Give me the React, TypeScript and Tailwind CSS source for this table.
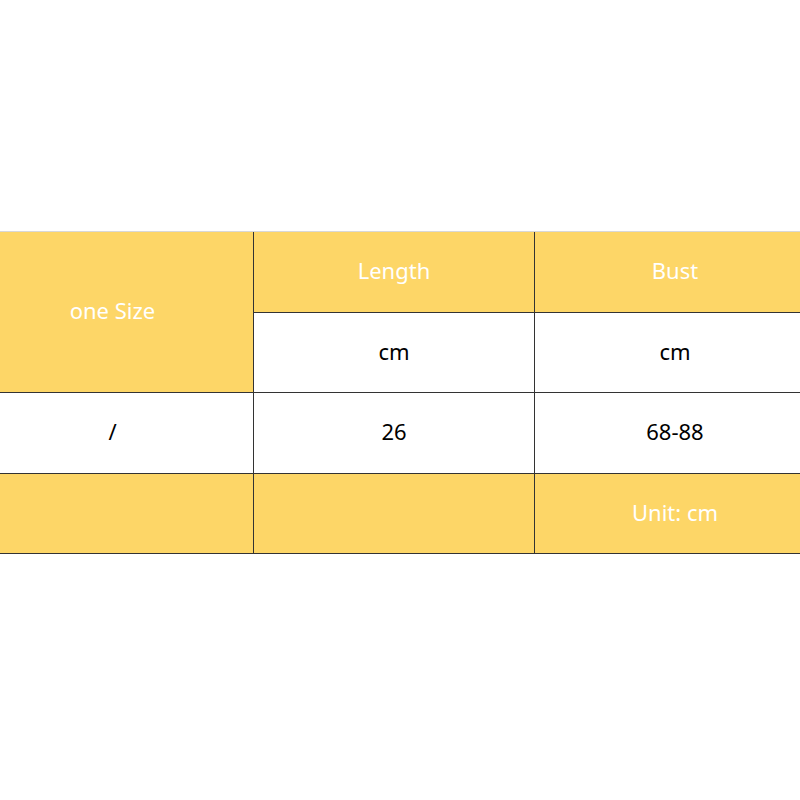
export default function App() {
  const y = "bg-[#fdd667]";
  const cell = "flex items-center justify-center pb-[3px] border-[#333] ";
  return (
    <div className="w-[800px] h-[800px] bg-white flex flex-col pt-[231px] overflow-hidden" style={{ fontFamily: '"Noto Sans", "Open Sans", sans-serif' }}>
      <div className="h-px bg-[#d8d8d8]" />
      <div className="ml-[-28px] grid grid-cols-[282px_281px_280px] grid-rows-[81px_80px_81px_80px] text-[22px] w-[843px]">
        <div className={`${cell} ${y} row-span-2 border-r border-b text-white`}>one Size</div>
        <div className={`${cell} ${y} border-r border-b text-white`}>Length</div>
        <div className={`${cell} ${y} border-b text-white`}>Bust</div>
        <div className={`${cell} bg-white border-r border-b text-black`}>cm</div>
        <div className={`${cell} bg-white border-b text-black`}>cm</div>
        <div className={`${cell} bg-white border-r border-b text-black`}>/</div>
        <div className={`${cell} bg-white border-r border-b text-black`}>26</div>
        <div className={`${cell} bg-white border-b text-black`}>68-88</div>
        <div className={`${cell} ${y} border-r border-b text-white`}></div>
        <div className={`${cell} ${y} border-r border-b text-white`}></div>
        <div className={`${cell} ${y} border-b text-white`}>Unit: cm</div>
      </div>
    </div>
  );
}
